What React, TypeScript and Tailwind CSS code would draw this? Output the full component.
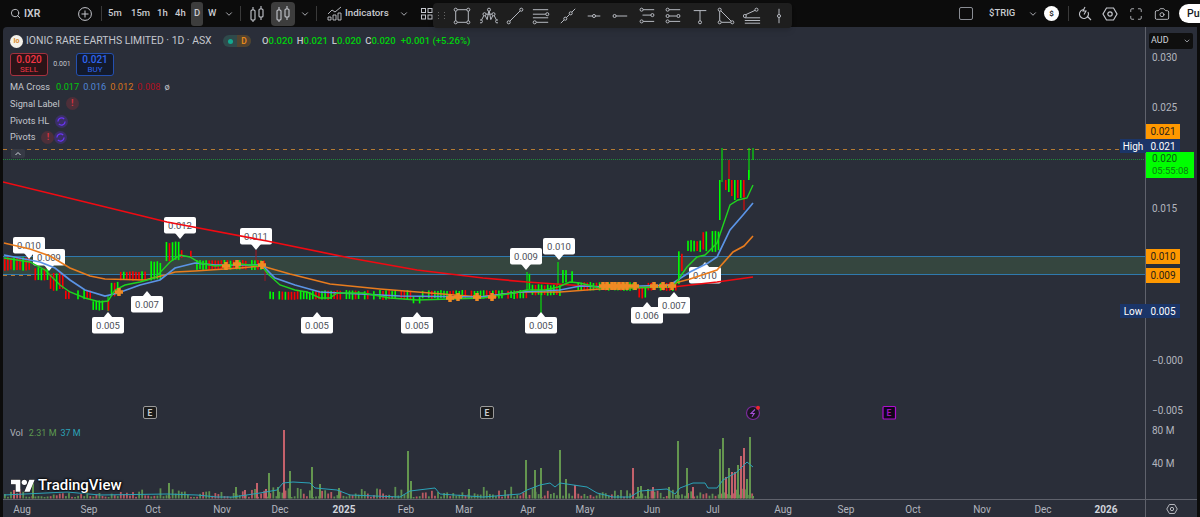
import React from 'react'
import { ChevronDown, Search, Camera, Maximize } from 'lucide-react'

const rnd = (n: number) => {
  const v = Math.sin(n * 12.9898) * 43758.5453
  return v - Math.floor(v)
}

const toPath = (pts: number[][]) => pts.map((p, i) => `${i ? 'L' : 'M'}${p[0]} ${p[1]}`).join(' ')

// x0, x1, top, bottom, chance of a green bar
const candleRuns = [
  [4, 30, 257, 271, 0.4],
  [30, 48, 267, 281, 0.4],
  [48, 62, 272, 291, 0.5],
  [62, 92, 290, 300, 0.4],
  [92, 108, 300, 311, 0.6],
  [108, 119, 281, 297, 0.8],
  [119, 150, 271, 281, 0.35],
  [150, 165, 261, 281, 0.8],
  [165, 180, 241, 262, 0.85],
  [180, 192, 250, 258, 0.1],
  [192, 264, 260, 270, 0.45],
  [268, 300, 291, 300, 0.5],
  [300, 318, 291, 300, 0.6],
  [318, 410, 290, 300, 0.5],
  [410, 420, 296, 304, 0.9],
  [420, 526, 290, 299, 0.5],
  [526, 530, 272, 291, 1],
  [530, 560, 284, 296, 0.5],
  [560, 577, 270, 284, 0.6],
  [577, 637, 282, 291, 0.5],
  [637, 647, 286, 299, 0.8],
  [647, 676, 282, 291, 0.5],
  [676, 680, 250, 288, 1],
  [680, 684, 252, 272, 0.2],
  [684, 702, 240, 252, 0.8],
  [702, 718, 230, 252, 0.8],
]

const candles = Array.from({ length: 236 }, (_, i) => {
  const x = 4 + i * 3.05
  const run = candleRuns.find((r) => x >= r[0] && x < r[1])
  if (!run || rnd(i + 1100) < 0.12) return null
  const span = run[3] - run[2]
  const top = run[2] + rnd(i + 1) * span * 0.12
  const bottom = run[3] - rnd(i + 300) * span * 0.12
  return { x, top, bottom, green: rnd(i + 700) < run[4] }
}).filter(Boolean) as { x: number; top: number; bottom: number; green: boolean }[]

// the last weeks, read off by hand
const lastCandles = [
  { x: 719, top: 180, bottom: 220, green: true },
  { x: 725, top: 180, bottom: 190, green: false },
  { x: 728, top: 179, bottom: 192, green: true },
  { x: 731, top: 180, bottom: 196, green: false },
  { x: 734, top: 180, bottom: 200, green: true },
  { x: 737, top: 180, bottom: 198, green: false },
  { x: 740, top: 180, bottom: 198, green: true },
  { x: 743, top: 180, bottom: 197, green: false },
  { x: 748, top: 170, bottom: 180, green: true },
]

const wicks = [
  [527, 272, 291, '#00ff00'],
  [541, 290, 315, '#00ff00'],
  [558, 262, 285, '#00ff00'],
  [256, 250, 262, '#a31621'],
  [265, 266, 281, '#a31621'],
  [722, 148, 182, '#00ff00'],
  [749, 148, 178, '#00ff00'],
  [753, 148, 160, '#00ff00'],
  [729, 160, 180, '#ff0000'],
  [744, 190, 210, '#ff0000'],
  [108, 296, 311, '#00ff00'],
] as [number, number, number, string][]

const greenMa = [[4, 258], [30, 262], [45, 270], [60, 285], [70, 292], [85, 298], [100, 302], [108, 301], [115, 290], [125, 285], [140, 282], [155, 278], [170, 262], [180, 255], [190, 257], [200, 263], [215, 266], [240, 264], [262, 266], [268, 274], [280, 285], [295, 290], [307, 292], [320, 298], [330, 298], [337, 293], [363, 293], [390, 298], [417, 300], [450, 299], [483, 298], [513, 293], [527, 290], [545, 290], [558, 287], [570, 282], [580, 283], [600, 288], [673, 287], [687, 267], [697, 257], [705, 255], [717, 243], [730, 205], [738, 200], [747, 198], [753, 185]]
const blueMa = [[4, 255], [40, 262], [55, 268], [70, 280], [85, 290], [105, 296], [118, 293], [140, 285], [160, 280], [175, 268], [195, 263], [215, 265], [262, 265], [275, 278], [295, 285], [320, 292], [400, 296], [480, 297], [520, 292], [560, 290], [580, 286], [610, 287], [670, 285], [690, 272], [708, 263], [717, 257], [730, 230], [743, 215], [753, 203]]
const orangeMa = [[4, 243], [30, 249], [50, 256], [70, 268], [90, 276], [105, 279], [145, 280], [165, 275], [175, 272], [195, 271], [240, 268], [262, 266], [290, 274], [330, 284], [380, 289], [430, 293], [480, 297], [520, 292], [560, 292], [600, 289], [660, 287], [690, 279], [717, 270], [733, 252], [744, 246], [753, 236]]
const redMa = [[3, 182], [77, 200], [167, 222], [267, 241], [350, 258], [417, 270], [483, 278], [527, 282], [600, 287], [673, 287], [717, 282], [753, 277]]
const volMa = [[4, 495], [67, 492], [100, 495], [167, 494], [197, 495], [217, 497], [233, 497], [260, 493], [277, 490], [283, 483], [293, 482], [310, 483], [315, 488], [337, 490], [350, 495], [400, 497], [410, 491], [435, 488], [440, 494], [483, 497], [520, 494], [527, 490], [540, 485], [550, 483], [555, 487], [560, 483], [587, 487], [597, 493], [613, 497], [630, 497], [640, 491], [667, 489], [675, 494], [680, 488], [693, 483], [705, 483], [708, 488], [717, 488], [723, 480], [737, 472], [747, 462], [753, 467]]

const crosses = [[119, 292], [226, 266], [237, 264], [262, 265], [450, 298], [458, 297], [477, 297], [492, 297], [603, 286], [607, 286], [612, 286], [615, 286], [619, 286], [623, 286], [627, 286], [635, 286], [654, 286], [663, 286], [672, 286]]

// x, y of the box, text, pointer side
const pivotLabels: [number, number, string, 'down' | 'up'][] = [
  [13, 237, '0.010', 'down'],
  [33, 249, '0.009', 'down'],
  [164, 217, '0.012', 'down'],
  [240, 228, '0.011', 'down'],
  [92, 317, '0.005', 'up'],
  [131, 296, '0.007', 'up'],
  [301, 317, '0.005', 'up'],
  [401, 317, '0.005', 'up'],
  [510, 248, '0.009', 'down'],
  [543, 238, '0.010', 'down'],
  [525, 317, '0.005', 'up'],
  [631, 307, '0.006', 'up'],
  [658, 297, '0.007', 'up'],
  [689, 267, '0.010', 'up'],
]

// x, top of the bar, red
const bigVolumes: [number, number, boolean][] = [
  [13, 490, true], [32, 483, false], [168, 483, false], [235, 487, false], [244, 490, true], [256, 483, true], [265, 489, true], [268, 473, false], [277, 487, false], [283, 430, true], [289, 471, false], [311, 467, false], [319, 484, false], [338, 488, false],
  [407, 451, false], [410, 481, false], [468, 489, false], [525, 460, false], [534, 470, false], [540, 468, false], [559, 450, false], [565, 479, false], [574, 485, true], [632, 468, true], [637, 487, false], [640, 486, false], [647, 489, false], [652, 487, true], [668, 487, false], [677, 441, false], [686, 468, false], [692, 487, true], [719, 449, false], [722, 438, false], [725, 477, true], [728, 468, false], [731, 472, true], [734, 472, true], [737, 465, false], [740, 456, true], [743, 448, true], [746, 479, false], [749, 437, false], [752, 496, false],
]

const smallVolumes = Array.from({ length: 246 }, (_, i) => {
  const x = 4 + i * 3.05
  return { x, top: 497 - rnd(i + 50) * rnd(i + 90) * 12, red: rnd(i + 500) < 0.4 }
})

const priceTicks = [
  ['0.030', 58],
  ['0.025', 108],
  ['0.015', 209],
  ['−0.000', 361],
  ['−0.005', 411],
  ['80 M', 431],
  ['40 M', 464],
] as [string, number][]

const timeTicks = [
  ['Aug', 22], ['Sep', 89], ['Oct', 153], ['Nov', 222], ['Dec', 280], ['2025', 344], ['Feb', 406], ['Mar', 464], ['Apr', 528], ['May', 585], ['Jun', 652], ['Jul', 713], ['Aug', 783], ['Sep', 846], ['Oct', 913], ['Nov', 982], ['Dec', 1043], ['2026', 1106],
] as [string, number][]

const Dot = ({ x, y }: { x: number; y: number }) => <circle cx={x} cy={y} r="1.7" fill="#1e1e1e" />

const drawingTools = [
  <g><rect x="3" y="3" width="14" height="14" /><Dot x={3} y={3} /><Dot x={17} y={3} /><Dot x={3} y={17} /><Dot x={17} y={17} /></g>,
  <g><path d="M1 16 5 8l3 6 2-11 2 11 3-6 4 8M5 8l10 0" /><Dot x={1} y={16} /><Dot x={5} y={8} /><Dot x={10} y={3} /><Dot x={15} y={8} /><Dot x={19} y={16} /></g>,
  <g><path d="M3 17 17 3" /><Dot x={3} y={17} /><Dot x={17} y={3} /></g>,
  <g><path d="M1 3h17M1 8h15M1 12h17M4 17h14" /><Dot x={17} y={8} /><Dot x={3} y={17} /></g>,
  <g><path d="M2 18 18 2" /><Dot x={7} y={13} /><Dot x={13} y={7} /></g>,
  <g><path d="M3 10h14" /><Dot x={10} y={10} /></g>,
  <g><path d="M4 10h14" /><Dot x={4} y={10} /></g>,
  <g><path d="M5 3h13M5 9h11M5 16h13" /><Dot x={4} y={3} /><Dot x={16} y={9} /><Dot x={4} y={16} /></g>,
  <g><path d="M4 3h14M4 10h10M4 16h14" /><Dot x={4} y={3} /><Dot x={4} y={10} /><Dot x={16} y={10} /><Dot x={4} y={16} /></g>,
  <g><path d="M3 4h14M10 4v13" /><Dot x={10} y={17} /></g>,
  <g><path d="M3 3v14h14Z" /><Dot x={3} y={3} /><Dot x={3} y={17} /><Dot x={17} y={17} /></g>,
  <g><path d="M2 9 15 3M2 12h17M2 15h17M2 18h17" /><Dot x={2} y={10} /><Dot x={15} y={3} /></g>,
  <g><path d="M10 2v16" /><Dot x={10} y={10} /></g>,
]

const CandleIcon = () => (
  <svg width="18" height="18" viewBox="0 0 18 18" fill="none" stroke="#c4c6cc" strokeWidth="1.1">
    <rect x="3" y="5" width="4" height="10" rx="1" />
    <path d="M5 2v3M5 15v2M13 1v3M13 12v3" />
    <rect x="11" y="4" width="4" height="8" rx="1" />
  </svg>
)

const SettingsHex = ({ size }: { size: number }) => (
  <svg width={size} height={size} viewBox="0 0 16 16" fill="none" stroke="#c4c6cc" strokeWidth="1.2">
    <path d="M4.5 2h7L15 8l-3.5 6h-7L1 8z" />
    <circle cx="8" cy="8" r="2.2" />
  </svg>
)

const SignalDot = ({ purple }: { purple?: boolean }) =>
  purple ? (
    <span className="flex h-[13px] w-[13px] items-center justify-center rounded-full bg-[#3a2f66]">
      <svg width="9" height="9" viewBox="0 0 10 10" fill="none" stroke="#6a35f5" strokeWidth="1.4">
        <path d="M1 5a4 4 0 0 1 7-2.6M9 5a4 4 0 0 1-7 2.6" />
      </svg>
    </span>
  ) : (
    <span className="flex h-[13px] w-[13px] items-center justify-center rounded-full bg-[#4d2f39] text-[9px] font-bold leading-none text-[#d8323f]">!</span>
  )

const TopBar = () => (
  <div className="flex h-[27px] shrink-0 items-center bg-[#0c0c0c] text-[9.5px] font-medium text-[#c9cbd1]">
    <Search className="ml-[10px] h-[11px] w-[11px] text-[#c4c6cc]" />
    <span className="ml-[3px] w-[17px] text-[10.5px] font-semibold">IXR</span>
    <svg className="ml-[37px]" width="14" height="14" viewBox="0 0 14 14" fill="none" stroke="#c4c6cc">
      <circle cx="7" cy="7" r="6.4" />
      <path d="M7 3.5v7M3.5 7h7" />
    </svg>
    <div className="ml-[9px] h-[15px] w-px bg-[#3a3a3a]" />
    <span className="ml-[6px] w-[14px]">5m</span>
    <span className="ml-[9px] w-[18px]">15m</span>
    <span className="ml-[8px] w-[11px]">1h</span>
    <span className="ml-[7px] w-[12px]">4h</span>
    <span className="ml-[4px] flex h-[24px] w-[12px] items-center justify-center rounded-[3px] bg-[#3d3d3d]">D</span>
    <span className="ml-[5px] w-[10px]">W</span>
    <ChevronDown className="ml-[6px] h-[10px] w-[10px]" />
    <div className="ml-[6px] h-[15px] w-px bg-[#3a3a3a]" />
    <div className="ml-[7px]"><CandleIcon /></div>
    <span className="ml-[5px] flex h-[24px] w-[24px] items-center justify-center rounded-[4px] bg-[#3d3d3d]"><CandleIcon /></span>
    <ChevronDown className="ml-[5px] h-[10px] w-[10px]" />
    <div className="ml-[6px] h-[15px] w-px bg-[#3a3a3a]" />
    <svg className="ml-[10px]" width="16" height="15" viewBox="0 0 16 15" fill="none" stroke="#c4c6cc" strokeWidth="0.9">
      <path d="M1 8 5 4l3 2 6-5M1 14v-3h3v3zM6 14V9h3v5zM11 14V7h3v7z" />
    </svg>
    <span className="ml-[2px] w-[44px] text-[9.8px]">Indicators</span>
    <ChevronDown className="ml-[10px] h-[10px] w-[10px]" />
    <svg className="ml-[12px]" width="12" height="12" viewBox="0 0 12 12" fill="none" stroke="#c4c6cc">
      <rect x="0.5" y="0.5" width="4" height="4" />
      <rect x="7" y="0.5" width="4" height="4" />
      <rect x="0.5" y="7" width="4" height="4" />
      <rect x="7" y="7" width="4" height="4" />
    </svg>
    <div className="ml-auto flex items-center">
      <div className="h-[13px] w-[14px] rounded-[2px] border-[1.5px] border-[#8a8d94]" />
      <span className="ml-[16px] w-[26px]">$TRIG</span>
      <ChevronDown className="ml-[13px] h-[10px] w-[10px]" />
      <span className="ml-[6px] flex h-[15px] w-[15px] items-center justify-center rounded-full bg-white text-[8px] font-semibold text-[#111]">$</span>
      <div className="ml-[9px] h-[15px] w-px bg-[#3a3a3a]" />
      <svg className="ml-[9px]" width="14" height="15" viewBox="0 0 14 15" fill="none" stroke="#c4c6cc" strokeWidth="1.1">
        <path d="M6 3.5a4.5 4.5 0 1 0 4 2.5M9 10l4 4M7 1 5 5h3L6 8.5" />
      </svg>
      <div className="ml-[10px]"><SettingsHex size={16} /></div>
      <Maximize className="ml-[11px] h-[14px] w-[14px]" strokeWidth={1.4} />
      <Camera className="ml-[11px] h-[16px] w-[16px]" strokeWidth={1.3} />
      <div className="ml-[9px] flex h-[19px] w-[21px] items-center overflow-hidden rounded-l-full bg-white pl-[8px] text-[10.5px] text-[#131722]">Publish</div>
    </div>
  </div>
)

const DrawingBar = () => (
  <div className="absolute left-[433px] top-[3px] z-20 flex h-[25px] w-[359px] items-center rounded-[4px] bg-[#1e1e1e] pl-[5px] shadow-md">
    <div className="grid w-[10px] grid-cols-2 gap-[2px]">
      {Array.from({ length: 6 }, (_, i) => <span key={i} className="h-[1px] w-[1px] bg-[#666]" />)}
    </div>
    <div className="ml-[1px] flex">
      {drawingTools.map((tool, i) => (
        <span key={i} className="flex w-[26.4px] justify-center">
          <svg width="18" height="18" viewBox="0 0 20 20" fill="none" stroke="#b8bbc2" strokeWidth="1.1">{tool}</svg>
        </span>
      ))}
    </div>
  </div>
)

const Legend = () => (
  <div className="absolute left-[7px] top-[6px] flex flex-col text-[9.2px] leading-[16.6px] text-[#c3c6cd]">
    <div className="flex items-center">
      <span className="flex h-[13px] w-[13px] items-center justify-center rounded-full bg-[#f4f1ea] text-[7px] font-bold text-[#d98a2b]">Io</span>
      <span className="ml-[3px] w-[187px] whitespace-nowrap text-[10.4px]">IONIC RARE EARTHS LIMITED · 1D · ASX</span>
      <span className="ml-[10px] flex h-[12px] w-[28px] items-center overflow-hidden rounded-full bg-[#2f4a4b]">
        <span className="flex w-[14px] justify-center"><span className="h-[5px] w-[5px] rounded-full bg-[#14a88f]" /></span>
        <span className="flex h-full w-[14px] items-center justify-center bg-[#53432f] text-[8.5px] font-semibold text-[#e98a1a]">D</span>
      </span>
      <span className="ml-[11px] flex gap-[4px] text-[9.5px] font-medium text-[#00d20c]">
        <span><span className="text-[#c3c6cd]">O</span>0.020</span>
        <span><span className="text-[#c3c6cd]">H</span>0.021</span>
        <span><span className="text-[#c3c6cd]">L</span>0.020</span>
        <span><span className="text-[#c3c6cd]">C</span>0.020</span>
        <span className="ml-[1px]">+0.001 (+5.26%)</span>
      </span>
    </div>
    <div className="mt-[3px] flex items-center">
      <div className="flex h-[23px] w-[38px] flex-col items-center justify-center rounded-[3px] border border-[#a5313f] bg-[#2a1418] text-[10px] leading-[11px] text-[#f23645]">
        <span className="font-medium">0.020</span>
        <span className="text-[8px] leading-[10px]">SELL</span>
      </div>
      <span className="mx-[5px] w-[18px] text-center text-[7px]">0.001</span>
      <div className="flex h-[23px] w-[38px] flex-col items-center justify-center rounded-[3px] border border-[#2450b0] bg-[#131a2c] text-[10px] leading-[11px] text-[#2f66f0]">
        <span className="font-medium">0.021</span>
        <span className="text-[8px] leading-[10px]">BUY</span>
      </div>
    </div>
    <div className="mt-[3px] flex gap-[4px]">
      <span className="mr-[2px]">MA Cross</span>
      <span className="text-[#00c80c]">0.017</span>
      <span className="text-[#4f86d8]">0.016</span>
      <span className="text-[#d9741a]">0.012</span>
      <span className="text-[#b01020]">0.008</span>
      <span>ø</span>
    </div>
    <div className="mt-[0.5px] flex items-center gap-[6px]">Signal Label <SignalDot /></div>
    <div className="mt-[0.5px] flex items-center gap-[6px]">Pivots HL <SignalDot purple /></div>
    <div className="flex items-center gap-[6px]">Pivots <span className="flex"><SignalDot /><SignalDot purple /></span></div>
  </div>
)

const ChartDrawing = () => (
  <svg className="absolute inset-0 h-full w-full" viewBox="3 27 1142 472" fontFamily="Roboto, sans-serif">
    {/* support zone */}
    <rect x="3" y="256.5" width="1142" height="18" fill="#35463f" />
    <path d="M3 256.5H1145M3 274.5H1145" stroke="#2f79ad" strokeWidth="1" />
    <path d="M3 149.5H1120" stroke="#b47a32" strokeWidth="1" strokeDasharray="4 4" />
    <path d="M3 275.5H36" stroke="#b47a32" strokeWidth="1" strokeDasharray="4 4" />
    <path d="M3 159.5H1145" stroke="#1f8a3a" strokeWidth="1" strokeDasharray="1 1" />
    <rect x="11" y="149" width="14" height="9" rx="2" fill="#363a45" />
    <path d="M15.5 155l2.5-2.5 2.5 2.5" stroke="#d1d4dc" fill="none" />

    {/* candles */}
    {wicks.map(([x, y1, y2, c], i) => (
      <line key={i} x1={x} x2={x} y1={y1} y2={y2} stroke={c} />
    ))}
    {[...candles, ...lastCandles].map((c, i) => (
      <rect key={i} x={c.x} y={c.top} width="1.6" height={c.bottom - c.top} fill={c.green ? '#00ff00' : '#ff0000'} />
    ))}

    {/* pivot labels sit under the moving averages */}
    {pivotLabels.map(([x, y, text, side], i) => (
      <g key={i}>
        <rect x={x} y={y} width="32" height="16.5" rx="2" fill="#ffffff" />
        <path d={side === 'down' ? `M${x + 11} ${y + 16}h10l-5 6z` : `M${x + 11} ${y + 1}h10l-5 -6z`} fill="#ffffff" />
        <text x={x + 16} y={y + 12} textAnchor="middle" fontSize="9.5" fill="#4a4d57">{text}</text>
      </g>
    ))}

    <path d={toPath(redMa)} fill="none" stroke="#f00a12" strokeWidth="1.7" />
    <path d={toPath(orangeMa)} fill="none" stroke="#e87c1e" strokeWidth="1.6" />
    <path d={toPath(blueMa)} fill="none" stroke="#5b94e6" strokeWidth="1.7" />
    <path d={toPath(greenMa)} fill="none" stroke="#1fd41f" strokeWidth="1.4" />
    {crosses.map(([x, y], i) => (
      <path key={i} d={`M${x - 4} ${y}h8M${x} ${y - 4}v8`} stroke="#f08a24" strokeWidth="3.5" />
    ))}

    {/* earnings and events */}
    {[150, 487].map((x) => (
      <g key={x}>
        <rect x={x - 6.5} y="406.5" width="13" height="12" rx="1.5" fill="#1b1b1b" stroke="#9a9a9a" />
        <text x={x} y="416" textAnchor="middle" fontSize="8.5" fontWeight="700" fill="#c9cbd1">E</text>
      </g>
    ))}
    <rect x="883" y="406.5" width="12.5" height="12.5" rx="1" fill="#10061a" stroke="#b00fd0" strokeWidth="1.2" />
    <text x="889" y="416" textAnchor="middle" fontSize="8.5" fontWeight="700" fill="#9c12bd">E</text>
    <circle cx="753" cy="413" r="6.5" fill="#1b1522" stroke="#7a2b9a" strokeWidth="1.2" />
    <path d="M755 409.5 751 413.5h3.2l-2.2 3.2" fill="none" stroke="#a44fd6" strokeWidth="1.1" />
    <circle cx="758" cy="407.8" r="2" fill="#f0242f" />

    {/* volume */}
    {smallVolumes.map((v, i) => (
      <rect key={i} x={v.x} y={v.top} width="1.8" height={498.5 - v.top} fill={v.red ? '#b85a62' : '#5d8f50'} />
    ))}
    {bigVolumes.map(([x, top, red], i) => (
      <rect key={i} x={x} y={top} width="2" height={498.5 - top} fill={red ? '#c4616b' : '#64964f'} />
    ))}
    <path d={toPath(volMa)} fill="none" stroke="#2aa3b8" strokeWidth="1" />
  </svg>
)

const TradingViewMark = () => (
  <div className="absolute left-[8px] top-[450px] flex items-center gap-[3px] text-white [text-shadow:0_0_2px_#000,0_0_2px_#000,0_0_3px_#000]">
    <svg width="24" height="16" viewBox="0 0 36 24" fill="#ffffff" stroke="#111" strokeWidth="1" paintOrder="stroke">
      <path d="M14 22H7V11H0V4h14zM28 22h-8l7.5-18h8z" />
      <circle cx="20" cy="8" r="4" />
    </svg>
    <span className="text-[15px] font-medium leading-none">TradingView</span>
  </div>
)

const PriceAxis = () => (
  <div className="relative w-[52px] shrink-0 border-l border-[#5f626c] bg-[#2a2e39] text-[10px] text-[#b2b5be]">
    <div className="absolute left-[3px] top-[6px] flex h-[16px] w-[44px] items-center justify-between rounded-[2px] bg-[#0f0f0f] px-[2px] text-[9px] text-[#d1d4dc]">
      AUD <ChevronDown className="h-[8px] w-[8px]" />
    </div>
    {priceTicks.map(([label, y]) => (
      <span key={label} className="absolute left-[6px] leading-none" style={{ top: y - 32 }}>{label}</span>
    ))}
    <div className="absolute left-0 top-[97px] flex h-[15px] w-[34px] items-center justify-center bg-[#ff9800] text-[#2a2118]">0.021</div>
    <div className="absolute left-0 top-[112px] flex h-[14px] w-[34px] items-center justify-center bg-[#1b3568] text-white">0.021</div>
    <div className="absolute left-[-26px] top-[112px] flex h-[14px] w-[26px] items-center justify-center bg-[#1b3568] text-white">High</div>
    <div className="absolute left-0 top-[125px] flex h-[26px] w-[48px] flex-col justify-center bg-[#00ff00] pl-[6px] text-[9.5px] leading-[12px] text-[#0c7a12]">
      <span className="text-[10px] text-[#0a5c12]">0.020</span>
      <span>05:55:08</span>
    </div>
    <div className="absolute left-0 top-[222px] flex h-[15px] w-[34px] items-center justify-center bg-[#ff9800] text-[#2a2118]">0.010</div>
    <div className="absolute left-0 top-[241px] flex h-[15px] w-[34px] items-center justify-center bg-[#ff9800] text-[#2a2118]">0.009</div>
    <div className="absolute left-0 top-[277px] flex h-[14px] w-[34px] items-center justify-center bg-[#1b3568] text-white">0.005</div>
    <div className="absolute left-[-26px] top-[277px] flex h-[14px] w-[26px] items-center justify-center bg-[#1b3568] text-white">Low</div>
  </div>
)

const TimeAxis = () => (
  <div className="flex h-[18px] shrink-0 border-t border-[#5f626c] bg-[#2a2e39] text-[10px] text-[#b2b5be]">
    <div className="relative w-[1142px] shrink-0">
      {timeTicks.map(([label, x], i) => (
        <span
          key={i}
          className={label.length === 4 ? 'absolute top-[2px] -translate-x-1/2 font-bold text-[#d1d4dc]' : 'absolute top-[2px] -translate-x-1/2'}
          style={{ left: x - 3 }}
        >
          {label}
        </span>
      ))}
    </div>
    <div className="flex flex-1 items-center justify-center border-l border-[#5f626c]">
      <SettingsHex size={12} />
    </div>
  </div>
)

export default function App() {
  return (
    <div className="relative flex h-[517px] w-[1200px] flex-col overflow-hidden bg-[#0c0c0c] font-['Roboto',sans-serif]">
      <TopBar />
      <DrawingBar />
      <div className="flex flex-1 flex-col overflow-hidden pl-[3px] pr-[3px]">
        <div className="flex flex-1">
          <div className="relative w-[1142px] shrink-0 overflow-hidden rounded-tl-[4px] bg-[#2a2e39]">
            <ChartDrawing />
            <Legend />
            <div className="absolute left-[7px] top-[402px] flex gap-[4px] text-[9px] leading-none text-[#b2b5be]">
              <span className="mr-[2px]">Vol</span>
              <span className="text-[#5d9a50]">2.31 M</span>
              <span className="text-[#2aa3b8]">37 M</span>
            </div>
            <TradingViewMark />
          </div>
          <PriceAxis />
        </div>
        <TimeAxis />
      </div>
    </div>
  )
}
